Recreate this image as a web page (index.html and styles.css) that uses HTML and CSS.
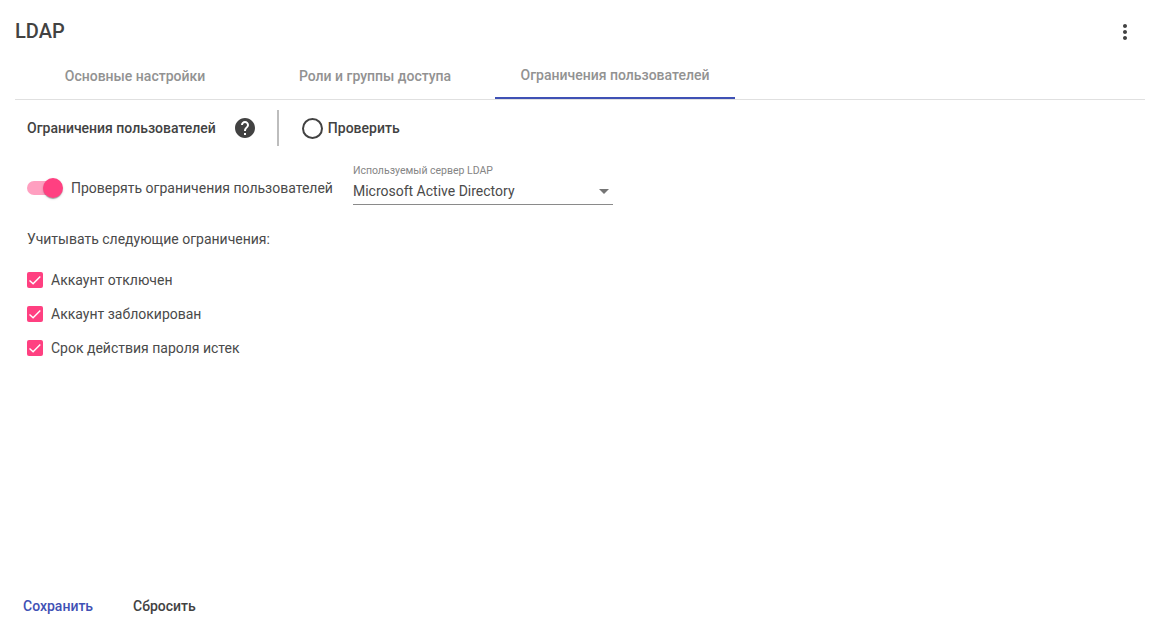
FILE: index.html
```html
<!DOCTYPE html>
<html lang="ru">
<head>
<meta charset="utf-8">
<title>LDAP</title>
<link rel="stylesheet" href="styles.css">
</head>
<body>
<div class="page">
  <header class="header">
    <h1 class="title">LDAP</h1>
    <button class="more" aria-label="Меню">
      <svg width="24" height="24" viewBox="0 0 24 24"><path fill="#424242" d="M12 8c1.1 0 2-.9 2-2s-.9-2-2-2-2 .9-2 2 .9 2 2 2zm0 2c-1.1 0-2 .9-2 2s.9 2 2 2 2-.9 2-2-.9-2-2-2zm0 6c-1.1 0-2 .9-2 2s.9 2 2 2 2-.9 2-2-.9-2-2-2z"/></svg>
    </button>
  </header>
  <nav class="tabs">
    <div class="tab">Основные настройки</div>
    <div class="tab">Роли и группы доступа</div>
    <div class="tab tab-active">Ограничения пользователей</div>
  </nav>
  <section class="toolbar">
    <span class="toolbar-title">Ограничения пользователей</span>
    <svg class="help" width="24" height="24" viewBox="0 0 24 24"><path fill="#424242" d="M12 2C6.48 2 2 6.48 2 12s4.48 10 10 10 10-4.48 10-10S17.52 2 12 2zm1 17h-2v-2h2v2zm2.07-7.75l-.9.92C13.45 12.9 13 13.5 13 15h-2v-.5c0-1.1.45-2.1 1.17-2.83l1.24-1.26c.37-.36.59-.86.59-1.41 0-1.1-.9-2-2-2s-2 .9-2 2H8c0-2.21 1.79-4 4-4s4 1.79 4 4c0 .88-.36 1.68-.93 2.25z"/></svg>
    <span class="divider"></span>
    <span class="check-action"><span class="ring"></span>Проверить</span>
  </section>
  <section class="settings">
    <div class="toggle-row">
      <span class="switch"><span class="switch-track"></span><span class="switch-thumb"></span></span>
      <span class="toggle-label">Проверять ограничения пользователей</span>
    </div>
    <div class="select">
      <span class="select-label">Используемый сервер LDAP</span>
      <div class="select-value"><span>Microsoft Active Directory</span><span class="arrow"></span></div>
    </div>
  </section>
  <p class="lead">Учитывать следующие ограничения:</p>
  <ul class="checks">
    <li class="check"><svg class="box" width="16" height="16" viewBox="0 0 16 16"><rect width="16" height="16" rx="2" fill="#ff4081"/><path d="M2.5 8.4l3.6 3.4 7.2-7.4" fill="none" stroke="#fff" stroke-width="1.4"/></svg>Аккаунт отключен</li>
    <li class="check"><svg class="box" width="16" height="16" viewBox="0 0 16 16"><rect width="16" height="16" rx="2" fill="#ff4081"/><path d="M2.5 8.4l3.6 3.4 7.2-7.4" fill="none" stroke="#fff" stroke-width="1.4"/></svg>Аккаунт заблокирован</li>
    <li class="check"><svg class="box" width="16" height="16" viewBox="0 0 16 16"><rect width="16" height="16" rx="2" fill="#ff4081"/><path d="M2.5 8.4l3.6 3.4 7.2-7.4" fill="none" stroke="#fff" stroke-width="1.4"/></svg>Срок действия пароля истек</li>
  </ul>
  <footer class="footer">
    <span class="btn btn-primary">Сохранить</span>
    <span class="btn">Сбросить</span>
  </footer>
</div>
</body>
</html>
```
FILE: styles.css
```css
* { box-sizing: border-box; }
html, body { margin: 0; height: 100%; background: #fff; }
body { font-family: Roboto, "Liberation Sans", sans-serif; color: #4a4a4a; font-size: 14px; overflow: hidden; }
.page { height: 629px; padding: 0 12px 0 15px; display: flex; flex-direction: column; }
.header { height: 62px; display: flex; align-items: center; justify-content: space-between; }
.title { margin: 0; font-size: 20px; font-weight: 500; color: #424242; line-height: 24px; }
.more { width: 24px; height: 24px; padding: 0; border: 0; background: none; display: block; margin-right: 8px; margin-top: 2px; }
.more svg { display: block; }
.tabs { display: flex; height: 38px; border-bottom: 1px solid #e0e0e0; }
.tab { width: 240px; height: 38px; padding-bottom: 11px; display: flex; align-items: center; justify-content: center; font-weight: 500; color: #929292; font-size: 14px; }
.tab-active { border-bottom: 2px solid #3f51b5; height: 37px; padding-bottom: 9px; }
.toolbar { display: flex; align-items: center; height: 56px; padding: 0 0 0 12px; }
.toolbar-title { font-weight: 500; color: #424242; }
.help { margin-left: 17px; display: block; }
.divider { width: 2px; height: 36px; background: #bdbdbd; margin-left: 20px; }
.check-action { display: flex; align-items: center; margin-left: 23px; font-weight: 500; color: #424242; }
.ring { width: 21px; height: 21px; border: 2px solid #424242; border-radius: 50%; margin-right: 5px; }
.settings { display: flex; align-items: flex-start; padding-left: 12px; margin-top: 8px; }
.toggle-row { display: flex; align-items: center; height: 24px; margin-top: 12px; }
.switch { position: relative; width: 36px; height: 20px; display: block; }
.switch-track { position: absolute; left: 0; top: 3px; width: 34px; height: 14px; border-radius: 7px; background: #ff9fc0; }
.switch-thumb { position: absolute; left: 16px; top: 0; width: 20px; height: 20px; border-radius: 50%; background: #ff4081; box-shadow: 0 2px 1px -1px rgba(0,0,0,.2), 0 1px 1px rgba(0,0,0,.14), 0 1px 3px rgba(0,0,0,.12); }
.toggle-label { margin-left: 8px; }
.select { width: 260px; margin-left: 20px; border-bottom: 1px solid #8a8a8a; height: 41px; }
.select-label { display: block; font-size: 10.5px; line-height: 12px; color: #858585; margin-top: 1px; }
.select-value { display: flex; justify-content: space-between; align-items: center; line-height: 20px; margin-top: 4px; padding-right: 4px; }
.arrow { width: 0; height: 0; border-left: 5px solid transparent; border-right: 5px solid transparent; border-top: 5px solid #757575; }
.lead { margin: 24px 0 0 12px; line-height: 20px; }
.checks { list-style: none; margin: 14px 0 0 12px; padding: 0; }
.check { display: flex; align-items: center; height: 34px; }
.box { margin-right: 8px; display: block; }
.footer { margin-top: auto; display: flex; padding: 0 0 11px 8px; }
.btn { font-weight: 500; color: #424242; line-height: 24px; width: 110px; }
.btn-primary { color: #3f51b5; }
```
